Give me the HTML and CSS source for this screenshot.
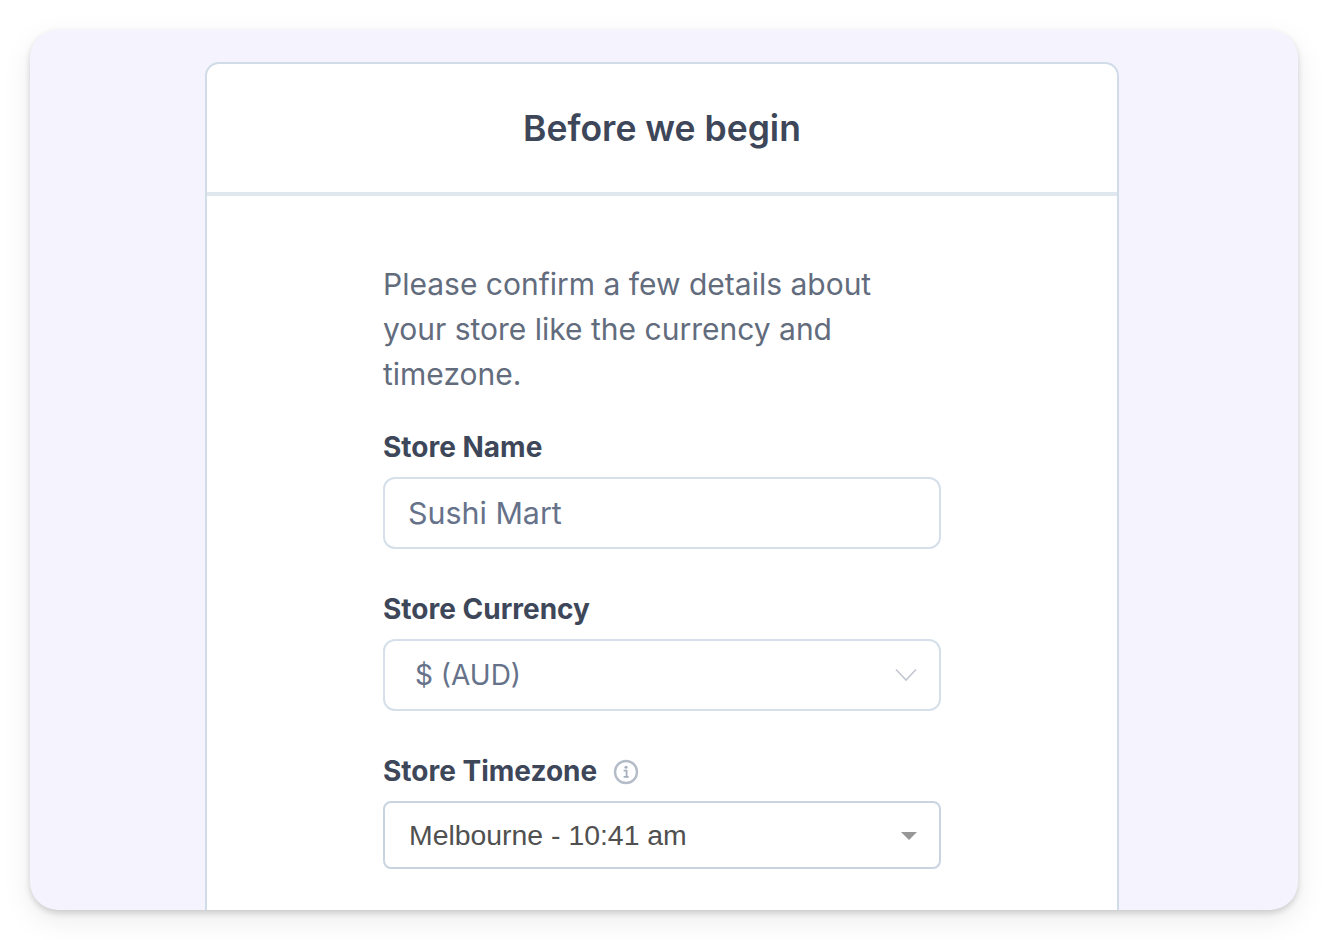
FILE: index.html
```html
<!DOCTYPE html>
<html lang="en">
<head>
  <meta charset="UTF-8" />
  <title>Before we begin</title>
  <link rel="stylesheet" href="styles.css">
</head>
<body>
  <div class="frame">
    <div class="card">
      <div class="card-header">
        <h1>Before we begin</h1>
      </div>
      <div class="card-body">
        <p class="intro">Please confirm a few details about your store like the currency and timezone.</p>
        <div class="field">
          <div class="field-label">Store Name</div>
          <div class="input">Sushi Mart</div>
        </div>
        <div class="field">
          <div class="field-label">Store Currency</div>
          <div class="input input-select">
            <span>$ (AUD)</span>
            <svg class="chevron" width="22" height="14" viewBox="0 0 22 14" fill="none" stroke="#c3c7cf" stroke-width="1.6">
              <path d="M1 1.5 L11 12 L21 1.5" />
            </svg>
          </div>
        </div>
        <div class="field">
          <div class="field-label">
            Store Timezone
            <svg class="info" width="26" height="26" viewBox="0 0 26 26" fill="none">
              <circle cx="13" cy="13" r="11" stroke="#b4bcc8" stroke-width="2.4" />
              <circle cx="13" cy="8.2" r="1.5" fill="#a5aebb" />
              <path d="M10.6 11.6 H13.6 V17.6 M10.6 17.8 H15.6" stroke="#a5aebb" stroke-width="1.7" />
            </svg>
          </div>
          <div class="input native-select">
            <span>Melbourne - 10:41 am</span>
            <span class="caret"></span>
          </div>
        </div>
      </div>
    </div>
  </div>
</body>
</html>
```

FILE: styles.css
```css
html, body {
  height: 100%;
}
body {
  margin: 0;
  padding: 30px;
  box-sizing: border-box;
  background: #fff;
  font-family: Inter, "Liberation Sans", sans-serif;
  overflow: hidden;
}
.frame {
  height: 880px;
  background: #f5f4fe;
  border-radius: 28px;
  box-shadow: 0 3px 6px rgba(0,0,0,0.16), 0 10px 30px rgba(0,0,0,0.08);
  overflow: hidden;
  display: flex;
  justify-content: center;
  padding: 32px 4px 0 0;
  box-sizing: border-box;
}
.card {
  width: 914px;
  height: 900px;
  box-sizing: border-box;
  background: #fff;
  border: 2px solid #d0dce8;
  border-radius: 14px;
  flex-shrink: 0;
}
.card-header {
  height: 132px;
  box-sizing: border-box;
  display: flex;
  align-items: center;
  justify-content: center;
  border-bottom: 4px solid #dfe7ef;
}
.card-header h1 {
  margin: 0;
  font-size: 35.5px;
  font-weight: 600;
  color: #3d4759;
}
.card-body {
  width: 558px;
  margin: 0 auto;
  padding-top: 66px;
}
.intro {
  margin: 0 0 32px;
  font-size: 30px;
  line-height: 45px;
  color: #626c7d;
}
.field {
  margin-bottom: 42px;
}
.field-label {
  display: flex;
  align-items: center;
  gap: 16px;
  height: 36px;
  margin-bottom: 12px;
  font-size: 28px;
  font-weight: 700;
  color: #3d4759;
}
.info {
  margin-top: 2px;
}
.input {
  height: 72px;
  box-sizing: border-box;
  display: flex;
  align-items: center;
  justify-content: space-between;
  padding: 0 23px;
  background: #fff;
  border: 2px solid #d5e0ea;
  border-radius: 12px;
  font-size: 30.4px;
  color: #66728a;
}
.input-select {
  padding: 0 22px 0 30px;
  font-size: 28px;
}
.native-select {
  height: 68px;
  padding: 1px 22px 0 24px;
  border-color: #c8d5e1;
  border-radius: 8px;
  font-family: "Liberation Sans", sans-serif;
  font-size: 28.4px;
  color: #505050;
}
.caret {
  width: 0;
  height: 0;
  border-left: 8px solid transparent;
  border-right: 8px solid transparent;
  border-top: 8px solid #979797;
}
```
